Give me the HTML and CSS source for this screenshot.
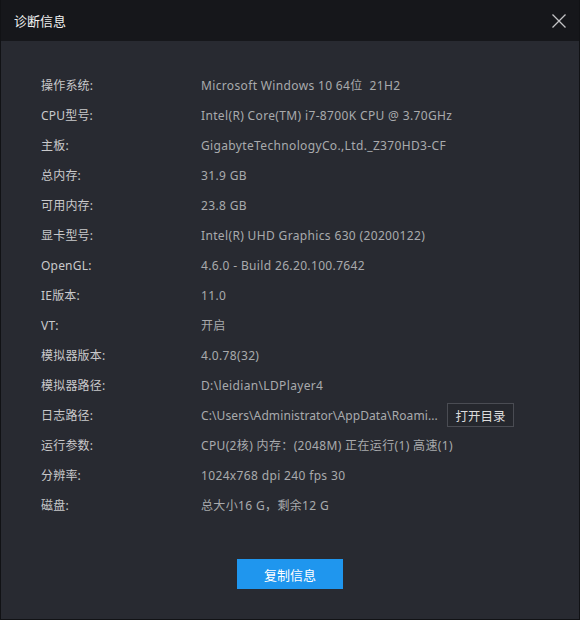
FILE: index.html
```html
<!DOCTYPE html>
<html lang="zh">
<head>
<meta charset="utf-8">
<link rel="stylesheet" href="styles.css">
</head>
<body>
<div class="dialog">
  <div class="titlebar">
    <span class="title">诊断信息</span>
    <svg class="close" width="16" height="16" viewBox="0 0 16 16"><path d="M1.5 1.5 L14.5 14.5 M14.5 1.5 L1.5 14.5" stroke="#c4c4c6" stroke-width="1.3" fill="none"/></svg>
  </div>
  <div class="content">
    <div class="rows">
      <div class="row"><span class="label">操作系统:</span><span class="value">Microsoft Windows 10 64位&nbsp; 21H2</span></div>
      <div class="row"><span class="label">CPU型号:</span><span class="value">Intel(R) Core(TM) i7-8700K CPU @ 3.70GHz</span></div>
      <div class="row"><span class="label">主板:</span><span class="value">GigabyteTechnologyCo.,Ltd._Z370HD3-CF</span></div>
      <div class="row"><span class="label">总内存:</span><span class="value">31.9 GB</span></div>
      <div class="row"><span class="label">可用内存:</span><span class="value">23.8 GB</span></div>
      <div class="row"><span class="label">显卡型号:</span><span class="value">Intel(R) UHD Graphics 630 (20200122)</span></div>
      <div class="row"><span class="label">OpenGL:</span><span class="value">4.6.0 - Build 26.20.100.7642</span></div>
      <div class="row"><span class="label">IE版本:</span><span class="value">11.0</span></div>
      <div class="row"><span class="label">VT:</span><span class="value">开启</span></div>
      <div class="row"><span class="label">模拟器版本:</span><span class="value">4.0.78(32)</span></div>
      <div class="row"><span class="label">模拟器路径:</span><span class="value">D:\leidian\LDPlayer4</span></div>
      <div class="row"><span class="label">日志路径:</span><span class="value path">C:\Users\Administrator\AppData\Roami...</span><button class="open-btn">打开目录</button></div>
      <div class="row"><span class="label">运行参数:</span><span class="value">CPU(2核) 内存：(2048M) 正在运行(1) 高速(1)</span></div>
      <div class="row"><span class="label">分辨率:</span><span class="value">1024x768 dpi 240 fps 30</span></div>
      <div class="row"><span class="label">磁盘:</span><span class="value">总大小16 G，剩余12 G</span></div>
    </div>
    <div class="actions"><button class="copy-btn">复制信息</button></div>
  </div>
</div>
</body>
</html>
```

FILE: styles.css
```css
* { box-sizing: border-box; }
html, body { margin: 0; padding: 0; }
body {
  width: 580px;
  height: 620px;
  background: #16171b;
  font-family: "Noto Sans", "Noto Sans CJK SC", sans-serif;
}
.dialog {
  width: 580px;
  height: 620px;
  display: flex;
  flex-direction: column;
  border: 1px solid #111215;
  border-top: none;
}
.titlebar {
  height: 41px;
  flex: none;
  background: #16171b;
  display: flex;
  align-items: center;
  justify-content: space-between;
  padding: 0 12px 0 13px;
}
.title {
  color: #f0f0f0;
  font-size: 13px;
}
.close { display: block; }
.content {
  flex: 1;
  background: #282a31;
  display: flex;
  flex-direction: column;
  padding: 29px 0 0 40px;
}
.rows { display: flex; flex-direction: column; }
.row {
  height: 30px;
  display: flex;
  align-items: center;
  font-size: 12px;
}
.label {
  width: 160px;
  flex: none;
  color: #c9c9cb;
  letter-spacing: 0.2px;
}
.value {
  color: #a9aaad;
  letter-spacing: 0.35px;
}
.path { width: 246px; flex: none; white-space: nowrap; letter-spacing: 0.1px; }
.open-btn {
  height: 24px;
  width: 67px;
  padding: 0;
  background: #25272d;
  border: 1px solid #4a4c53;
  color: #dcdcdc;
  font-family: inherit;
  font-size: 12.5px;
}
.actions {
  display: flex;
  justify-content: center;
  padding-top: 39px;
  padding-right: 40px;
}
.copy-btn {
  width: 106px;
  height: 30px;
  background: #1f96ee;
  border: none;
  color: #ffffff;
  font-family: inherit;
  font-size: 13px;
  padding: 0;
}
```
